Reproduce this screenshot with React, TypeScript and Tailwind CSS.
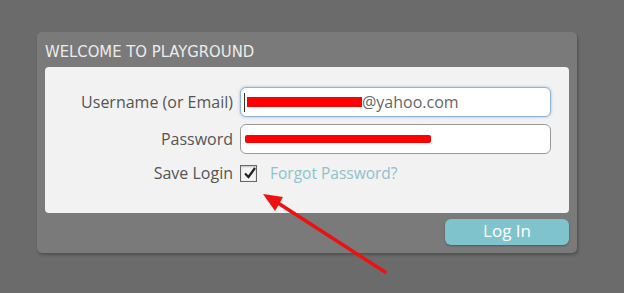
import React from "react";

export default function App() {
  return (
    <div className="relative w-[624px] h-[293px] bg-[#6b6b6b] overflow-hidden" style={{ fontFamily: "'Open Sans', Lato, sans-serif" }}>
      <div className="absolute left-[37px] top-[32px] w-[540px] h-[221px] rounded-[5px] bg-[#7a7a7a] shadow-[1px_2px_3px_rgba(0,0,0,0.25)] px-[8px] pt-[11px]">
        <div className="text-[16.5px] text-[#ececec] leading-[18px] h-[24px]" style={{ fontFamily: "'DejaVu Sans Condensed', 'Liberation Sans', sans-serif" }}>
          WELCOME TO PLAYGROUND
        </div>
        <div className="w-[524px] h-[146px] bg-[#f2f2f2] rounded-[4px] pt-[20px]">
          <div className="flex items-center h-[30px]">
            <div className="w-[188px] text-right text-[16px] leading-[20px] text-[#555]">Username (or Email)</div>
            <div className="ml-[7px] w-[311px] h-[30px] rounded-[6px] border-[1.5px] border-[#8fb4d6] bg-white shadow-[0_0_3px_rgba(100,150,200,0.6)] flex items-center relative">
              <div className="absolute left-[3px] top-[5px] w-[1px] h-[19px] bg-[#333]" />
              <div className="ml-[6px] w-[115px] h-[10px] bg-[#f00]" />
              <span className="text-[16px] leading-[20px] text-[#666]">@yahoo.com</span>
            </div>
          </div>
          <div className="flex items-center h-[30px] mt-[7px]">
            <div className="w-[188px] text-right text-[16px] leading-[20px] text-[#555]">Password</div>
            <div className="ml-[7px] w-[311px] h-[30px] rounded-[6px] border border-[#999] bg-white flex items-center">
              <div className="ml-[4px] w-[186px] h-[8px] rounded-[2px] bg-[#f00]" />
            </div>
          </div>
          <div className="flex items-center h-[22px] mt-[8px]">
            <div className="w-[188px] text-right text-[16px] leading-[20px] text-[#555]">Save Login</div>
            <div className="ml-[7px] w-[17px] h-[17px] border border-[#666] bg-[#f4f4f4] shadow-[inset_0_1px_2px_rgba(0,0,0,0.2)] relative">
              <svg className="absolute left-[1px] top-[-1px]" width="16" height="16" viewBox="0 0 16 16">
                <path d="M3 8.5 L6.5 12 L13 3" fill="none" stroke="#222" strokeWidth="2.2" />
              </svg>
            </div>
            <div className="ml-[13px] text-[15.5px] leading-[20px] text-[#8cc3cb]">Forgot Password?</div>
          </div>
        </div>
        <div className="flex justify-end mt-[6px]">
          <div className="w-[124px] h-[26px] rounded-[6px] bg-[#7fc3cd] text-white text-[17px] leading-[20px] pb-[2px] flex items-center justify-center shadow-[0_1px_2px_rgba(0,0,0,0.3)]">
            Log In
          </div>
        </div>
      </div>
      <svg className="absolute left-0 top-0" width="624" height="293">
        <line x1="385" y1="272" x2="278" y2="203" stroke="#ee1111" strokeWidth="3.5" strokeLinecap="round" />
        <polygon points="263,194 283,197 275,211" fill="#ee1111" />
      </svg>
    </div>
  );
}
